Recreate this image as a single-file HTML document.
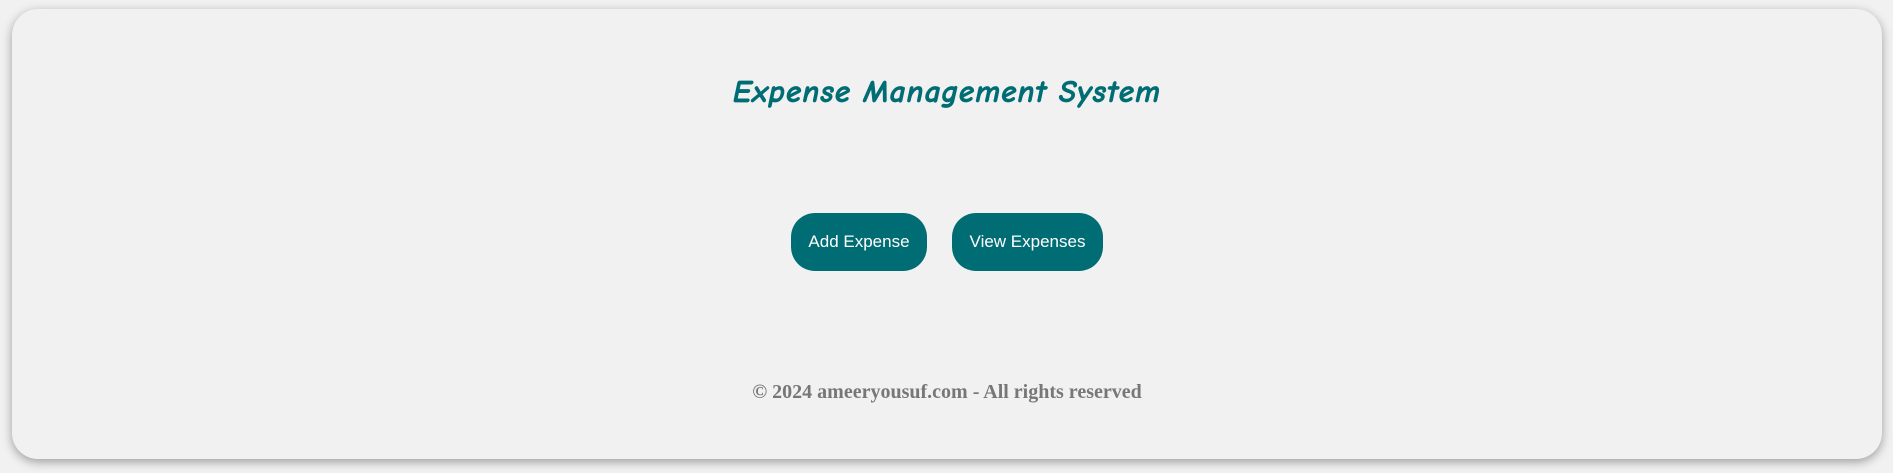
<!DOCTYPE html>
<html><head><meta charset="utf-8"><style>
html,body{margin:0;padding:0;width:1893px;height:473px;background:#f1f1f1;overflow:hidden}
.card{position:absolute;left:12px;top:9px;width:1870px;height:450px;background:#f1f1f1;border-radius:26px;box-shadow:0 3px 10px rgba(0,0,0,.35)}
h1{position:absolute;left:0;right:0;top:65px;margin:0;text-align:center;font-family:"Comic Sans MS","Comic Neue","DejaVu Sans",sans-serif;font-style:italic;font-weight:bold;font-size:31px;color:#006d75;letter-spacing:1.2px;-webkit-text-stroke:0.7px #006d75}
.btn{position:absolute;top:204px;height:58px;background:#006d75;color:#fff;border-radius:24px;font-family:"Liberation Sans",Arial,sans-serif;font-size:17px;line-height:58px;text-align:center}
.foot{position:absolute;left:0;right:0;top:372px;text-align:center;font-family:"Liberation Serif","Times New Roman",serif;font-weight:bold;font-size:20px;color:#777}
</style></head><body>
<div class="card">
<h1>Expense Management System</h1>
<div class="btn" style="left:779px;width:136px">Add Expense</div>
<div class="btn" style="left:940px;width:151px">View Expenses</div>
<div class="foot">© 2024 ameeryousuf.com - All rights reserved</div>
</div>
</body></html>
